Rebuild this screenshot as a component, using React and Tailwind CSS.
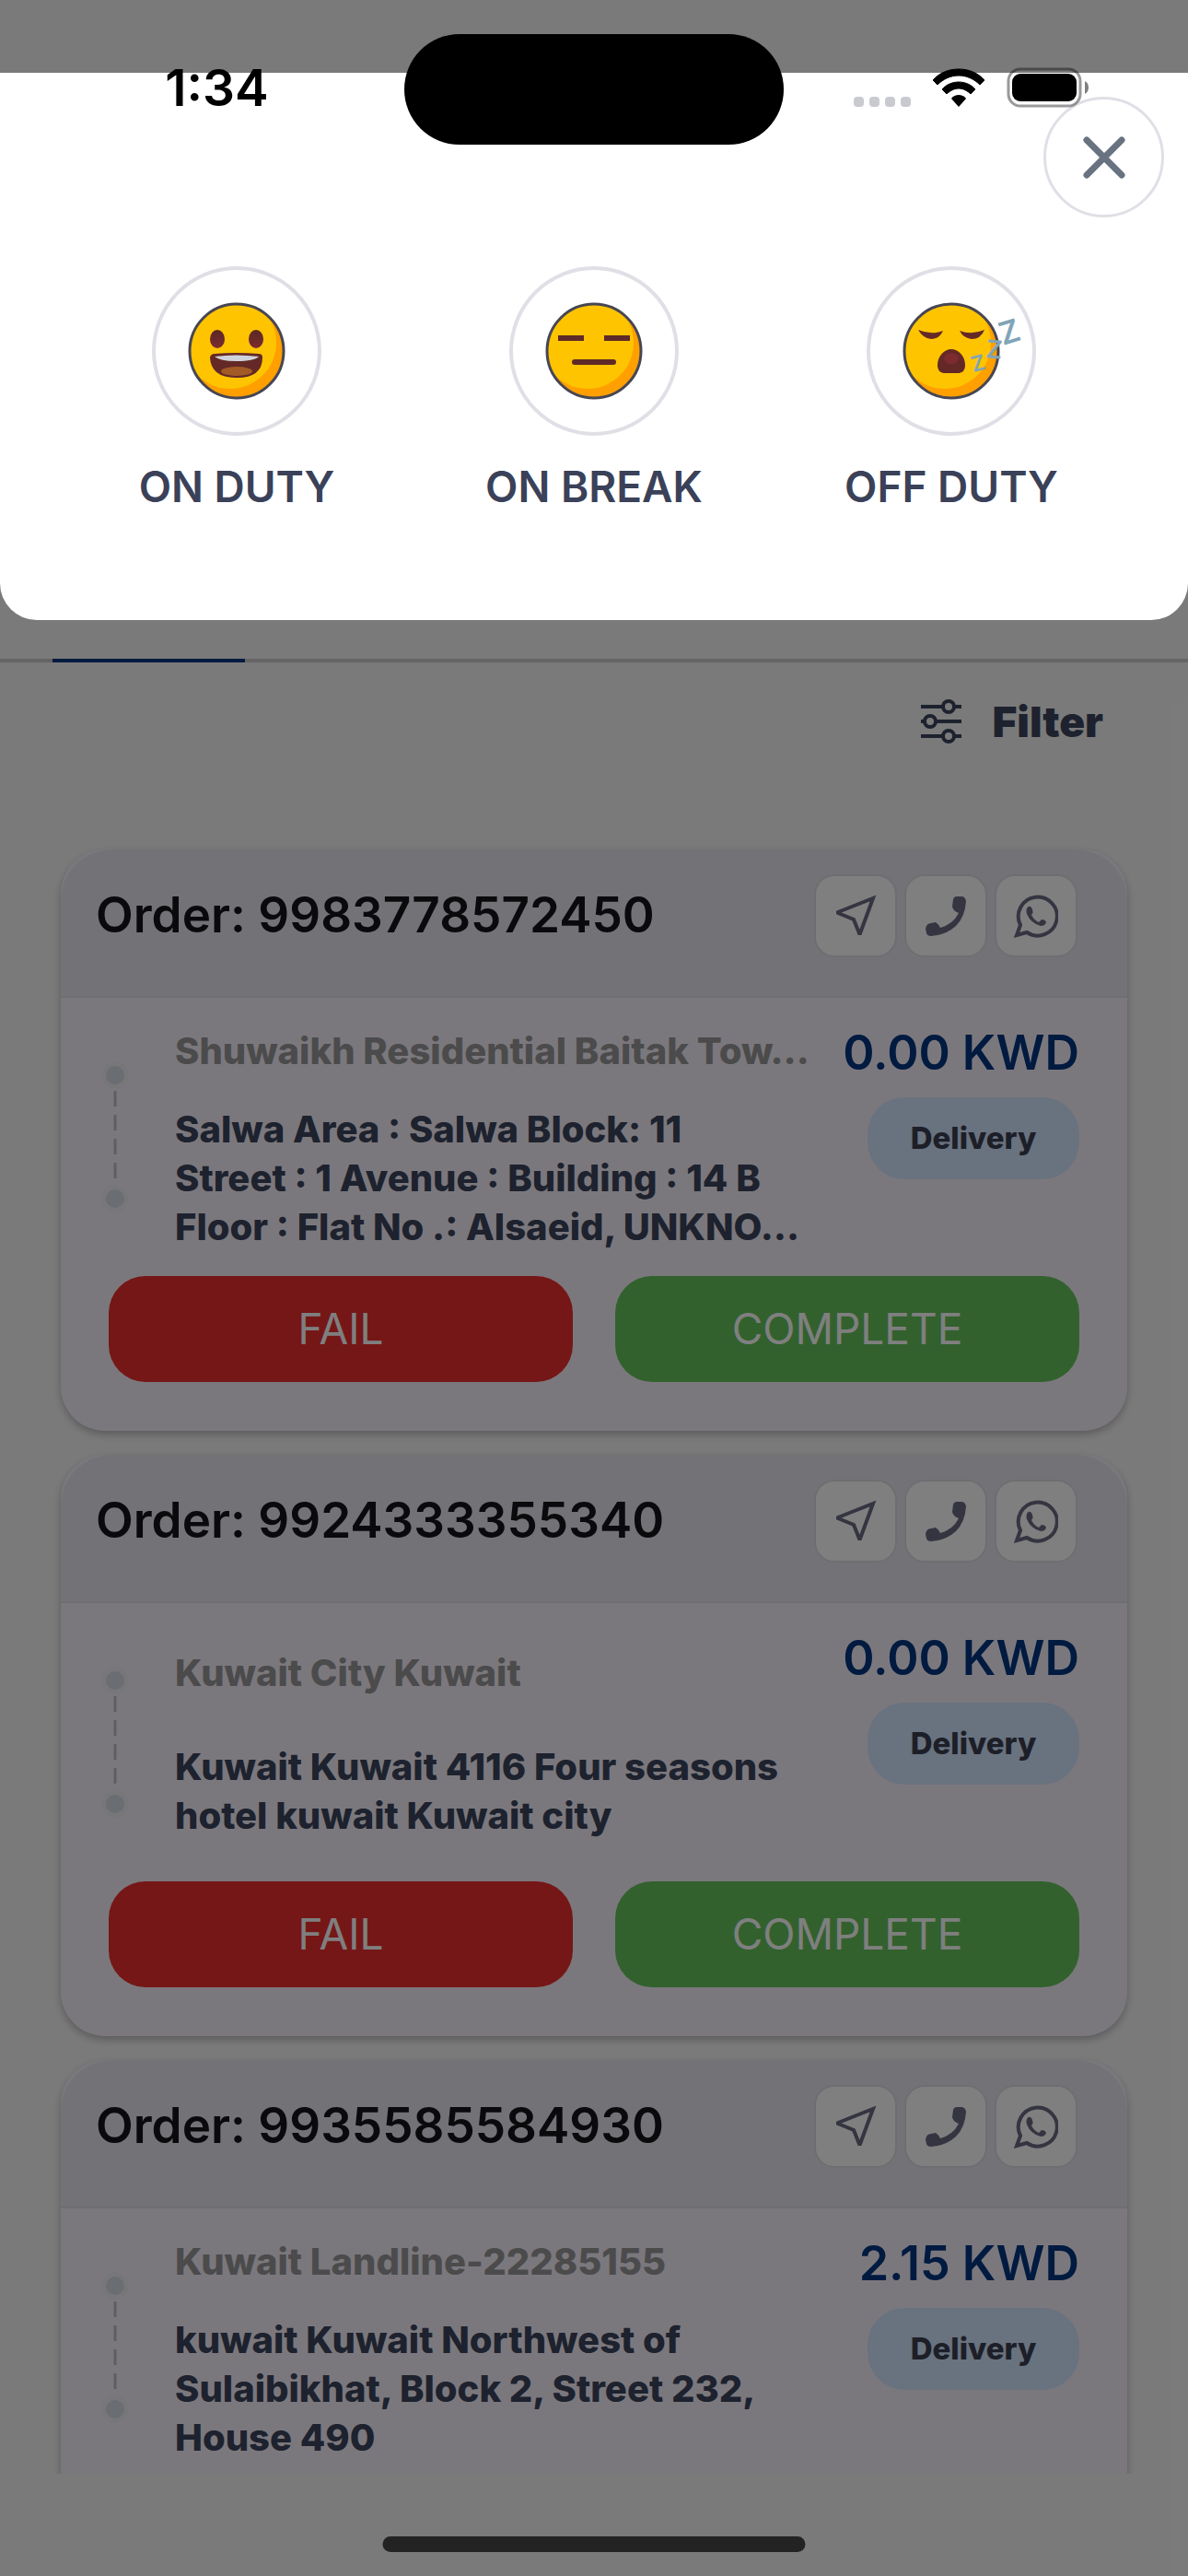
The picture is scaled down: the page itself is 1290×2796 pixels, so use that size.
import React from "react";

const orders = [
  {
    id: "9983778572450",
    place: "Shuwaikh Residential Baitak Tow…",
    address: ["Salwa Area : Salwa Block: 11", "Street : 1 Avenue : Building : 14 B", "Floor : Flat No .: Alsaeid, UNKNO…"],
    price: "0.00 KWD",
    actions: true,
  },
  {
    id: "9924333355340",
    place: "Kuwait City Kuwait",
    address: ["Kuwait Kuwait 4116 Four seasons", "hotel kuwait Kuwait city"],
    price: "0.00 KWD",
    actions: true,
  },
  {
    id: "9935585584930",
    place: "Kuwait Landline-22285155",
    address: ["kuwait Kuwait Northwest of", "Sulaibikhat, Block 2, Street 232,", "House 490"],
    price: "2.15 KWD",
    actions: false,
  },
];

function SendIcon() {
  return (
    <svg viewBox="0 0 48 48" className="size-12" fill="none" stroke="currentColor" strokeWidth="4">
      <path d="M43 5 29 43H28L22 28 5 21V20Z" />
    </svg>
  );
}

function PhoneIcon() {
  return (
    <svg viewBox="0 0 48 48" className="size-12" fill="currentColor">
      <path d="M32 6Q33 3 36 3H41Q45 3 46 8Q45 25 35 35Q24 45 8 46Q4 46 3 43L2 38Q3 32 8 32L13 31Q16 33 18 37Q32 33 38 21Q32 19 31 14Z" />
    </svg>
  );
}

function WhatsAppIcon() {
  return (
    <svg viewBox="0 0 48 48" className="size-12" fill="none" stroke="currentColor" strokeWidth="4">
      <path d="M7 34A21 21 0 1 1 14 42L3 45Z" />
      <path
        d="M14 16Q16 12 19 15Q22 20 19 23Q22 29 27 31L30 28Q34 28 35 31Q34 35 29 35Q18 32 14 22Q13 18 14 16Z"
        fill="currentColor"
        stroke="none"
      />
    </svg>
  );
}

function FilterIcon() {
  return (
    <svg viewBox="0 0 46 50" className="h-[50px] w-[46px]" fill="none" stroke="currentColor" strokeWidth="4">
      <path d="M1 9H25M38 9H45M1 25H4M18 25H45M1 41H25M38 41H45" />
      <circle cx="31" cy="9" r="6" />
      <circle cx="11" cy="25" r="6" />
      <circle cx="31" cy="41" r="6" />
    </svg>
  );
}

function Face({ kind }) {
  const shade = "shade-" + kind;
  const clip = "clip-" + kind;
  return (
    <svg viewBox="0 0 106 106" className="size-[106px] overflow-visible" aria-hidden="true">
      <defs>
        <clipPath id={clip}>
          <circle cx="53" cy="53" r="51" />
        </clipPath>
        <linearGradient id={shade} x1="0" y1="0" x2="0" y2="1">
          <stop offset="0" stopColor="#5a2724" />
          <stop offset="1" stopColor="#7c2c2e" />
        </linearGradient>
      </defs>
      <circle cx="53" cy="53" r="51" fill="#ff9f00" />
      <circle cx="46" cy="44" r="50" fill="#ffc400" clipPath={"url(#" + clip + ")"} />
      <circle cx="53" cy="53" r="51" fill="none" stroke="#464654" strokeWidth="3" />
      {kind === "happy" && (
        <g>
          <ellipse cx="32" cy="40" rx="8" ry="10" fill={"url(#" + shade + ")"} />
          <ellipse cx="74" cy="40" rx="8" ry="10" fill={"url(#" + shade + ")"} />
          <path d="M24 60Q25 56 29 56Q53 54 77 56Q81 56 81 60Q81 82 53 82Q25 82 24 60Z" fill="#642926" />
          <path d="M29 59Q53 56 77 59Q72 64 53 64Q35 64 29 59Z" fill="#cfd3da" />
          <ellipse cx="53" cy="75" rx="17" ry="5" fill="#a25a27" />
        </g>
      )}
      {kind === "neutral" && (
        <g stroke="#5f2a27" strokeWidth="6">
          <path d="M14 39H42M64 39H92" strokeLinecap="butt" />
          <path d="M32 65H74" strokeLinecap="round" />
        </g>
      )}
      {kind === "sleepy" && (
        <g>
          <path d="M17 30Q31 36 44 31Q40 40 31 40Q22 39 17 30ZM62 31Q75 36 89 30Q85 40 75 40Q66 39 62 31Z" fill="#642926" />
          <path d="M53 51C61 51 68 59 68 68C68 75 64 77 60 77H46C42 77 38 75 38 68C38 59 45 51 53 51Z" fill="#642926" />
          <ellipse cx="53" cy="61" rx="8" ry="6" fill="#7c2c2e" />
          <g fill="#80a5b7" fontFamily="Inter, sans-serif" fontWeight="600">
            <text x="109" y="47" fontSize="34" transform="rotate(-17 109 47)">Z</text>
            <text x="90" y="60" fontSize="27" transform="rotate(5 90 60)">Z</text>
            <text x="77" y="76" fontSize="23" transform="rotate(-15 77 76)">Z</text>
          </g>
        </g>
      )}
    </svg>
  );
}

function Route() {
  return (
    <div className="flex w-[30px] flex-col items-center pt-[69px]" aria-hidden="true">
      <span className="flex size-[30px] items-center justify-center rounded-full bg-[#efeef4]">
        <span className="size-5 rounded-full bg-[#d5dae2]" />
      </span>
      <svg viewBox="0 0 4 104" className="h-[104px] w-1" stroke="#bcbcc0" strokeWidth="3">
        <path d="M2 2V98" strokeDasharray="17 9" />
      </svg>
      <span className="flex size-[30px] items-center justify-center rounded-full bg-[#efeef4]">
        <span className="size-5 rounded-full bg-[#d5dae2]" />
      </span>
    </div>
  );
}

function IconButton({ label, children }) {
  return (
    <button
      type="button"
      aria-label={label}
      className="flex size-[90px] items-center justify-center rounded-[22px] border-2 border-[#dddce2] bg-white text-[#6a6a84]"
    >
      {children}
    </button>
  );
}

function OrderCard({ order }) {
  return (
    <article className="min-h-[631px] shrink-0 rounded-[48px] bg-[#f6f1fa] shadow-[0_4px_8px_rgba(0,0,0,0.25)]">
      <header className="flex h-[161px] items-center justify-between rounded-t-[56px] border-b-2 border-[#dedde3] bg-[#e7e5ee] pr-[54px] pb-4 pl-[38px]">
        <h2 className="text-[53px] leading-none font-semibold text-[#141418]">Order: {order.id}</h2>
        <div className="flex gap-2">
          <IconButton label="Navigate"><SendIcon /></IconButton>
          <IconButton label="Call"><PhoneIcon /></IconButton>
          <IconButton label="WhatsApp"><WhatsAppIcon /></IconButton>
        </div>
      </header>
      <div className="flex h-[302px] pr-[52px] pl-11">
        <Route />
        <div className="ml-[50px] flex h-[306px] min-w-0 flex-1 flex-col justify-evenly text-[40px] leading-[53px] font-extrabold whitespace-nowrap">
          <p className="text-[#969698]">{order.place}</p>
          <p className="text-[#3a445c]">
            {order.address.map((line) => (
              <span key={line} className="block">{line}</span>
            ))}
          </p>
        </div>
        <div className="flex flex-col items-end pt-7">
          <p className="text-[52px] leading-[64px] font-semibold whitespace-nowrap text-[#003480]">{order.price}</p>
          <span className="mt-4 flex h-[89px] w-[230px] items-center justify-center rounded-[40px] bg-[#d2e5fe] text-[33px] font-extrabold text-[#3a3e50]">
            Delivery
          </span>
        </div>
      </div>
      {order.actions && (
        <div className="flex gap-[46px] px-[52px] pb-[53px]">
          <button type="button" className="h-[115px] flex-1 rounded-[40px] bg-[#ea2e2e] text-[46px] text-white">FAIL</button>
          <button type="button" className="h-[115px] flex-1 rounded-[40px] bg-[#64c25c] text-[46px] text-white">COMPLETE</button>
        </div>
      )}
    </article>
  );
}

function Duty({ kind, label }) {
  return (
    <button type="button" className="flex w-[388px] flex-col items-center">
      <span className="flex size-[184px] items-center justify-center rounded-full border-4 border-[#e0dfe6]">
        <Face kind={kind} />
      </span>
      <span className="mt-[27px] text-[46px] leading-[56px] font-semibold text-[#3a4158]">{label}</span>
    </button>
  );
}

function StatusBar() {
  return (
    <div className="absolute inset-x-0 top-[37px] grid h-[120px] grid-cols-[1fr_412px_1fr]">
      <div className="flex justify-center pt-[26px] pl-8 text-[55px] leading-[64px] font-semibold text-black">
        <time>1:34</time>
      </div>
      <div className="rounded-full bg-black" />
      <div className="flex items-start justify-end gap-6 pt-9 pr-[106px]">
        <div className="flex gap-[6px] pt-8">
          <span className="size-[11px] rounded bg-[#c9cacf]" />
          <span className="size-[11px] rounded bg-[#c9cacf]" />
          <span className="size-[11px] rounded bg-[#c9cacf]" />
          <span className="size-[11px] rounded bg-[#c9cacf]" />
        </div>
        <svg viewBox="0 0 56 43" className="h-[43px] w-14" aria-label="Wi-Fi">
          <path d="M28 2C17 2 7 6 0 14L5 19C11 13 19 9 28 9S45 13 51 19L56 14C49 6 39 2 28 2Z" stroke="#000" strokeLinejoin="round" />
          <path d="M28 16C21 16 14 19 10 24L15 29C18 26 23 23 28 23S38 26 41 29L46 24C42 19 35 16 28 16Z" stroke="#000" strokeLinejoin="round" />
          <path d="M28 30C25 30 22 31 20 34L28 43L36 34C34 31 31 30 28 30Z" />
        </svg>
        <svg viewBox="0 0 91 44" className="h-11 w-[91px]" aria-label="Battery">
          <rect x="2" y="2" width="78" height="40" rx="13" fill="none" stroke="#000" strokeOpacity="0.4" strokeWidth="3" />
          <rect x="6" y="7" width="70" height="30" rx="9" />
          <path d="M85 15Q89 17 89 22Q89 27 85 29Z" fillOpacity="0.5" />
        </svg>
      </div>
    </div>
  );
}

export default function App() {
  return (
    <div className="relative flex h-screen flex-col overflow-hidden bg-[#f5f5f5] font-['Inter',sans-serif]">
      <nav className="flex h-[719px] shrink-0 items-end border-b-4 border-[#cacaca] pl-[57px]">
        <span className="-mb-1 h-1 w-[209px] bg-[#003480]" />
      </nav>
      <div className="flex shrink-0 justify-end pt-[35px] pr-[92px]">
        <button type="button" className="flex items-center gap-8 text-[46px] leading-[58px] font-black text-[#3a445c]">
          <FilterIcon />
          Filter
        </button>
      </div>
      <main className="flex min-h-0 flex-1 flex-col gap-[26px] overflow-hidden px-[66px] pt-[110px]">
        {orders.map((order) => (
          <OrderCard key={order.id} order={order} />
        ))}
      </main>
      <footer className="h-[111px] shrink-0" />

      <div className="absolute inset-0 bg-black/50" />

      <section role="dialog" aria-label="Duty status" className="absolute inset-x-0 top-[79px] rounded-b-[40px] bg-white pt-[210px] pb-[117px]">
        <button
          type="button"
          aria-label="Close"
          className="absolute top-[26px] right-[26px] flex size-[131px] items-center justify-center rounded-full border-[3px] border-[#e0dfe6]"
        >
          <svg viewBox="0 0 48 48" className="size-12" stroke="#687280" strokeWidth="7" strokeLinecap="round">
            <path d="M5 5 43 43M43 5 5 43" />
          </svg>
        </button>
        <div className="flex justify-center">
          <Duty kind="happy" label="ON DUTY" />
          <Duty kind="neutral" label="ON BREAK" />
          <Duty kind="sleepy" label="OFF DUTY" />
        </div>
      </section>

      <StatusBar />
      <div className="absolute bottom-[26px] left-1/2 h-[17px] w-[459px] -translate-x-1/2 rounded-full bg-[#232323]" />
    </div>
  );
}
